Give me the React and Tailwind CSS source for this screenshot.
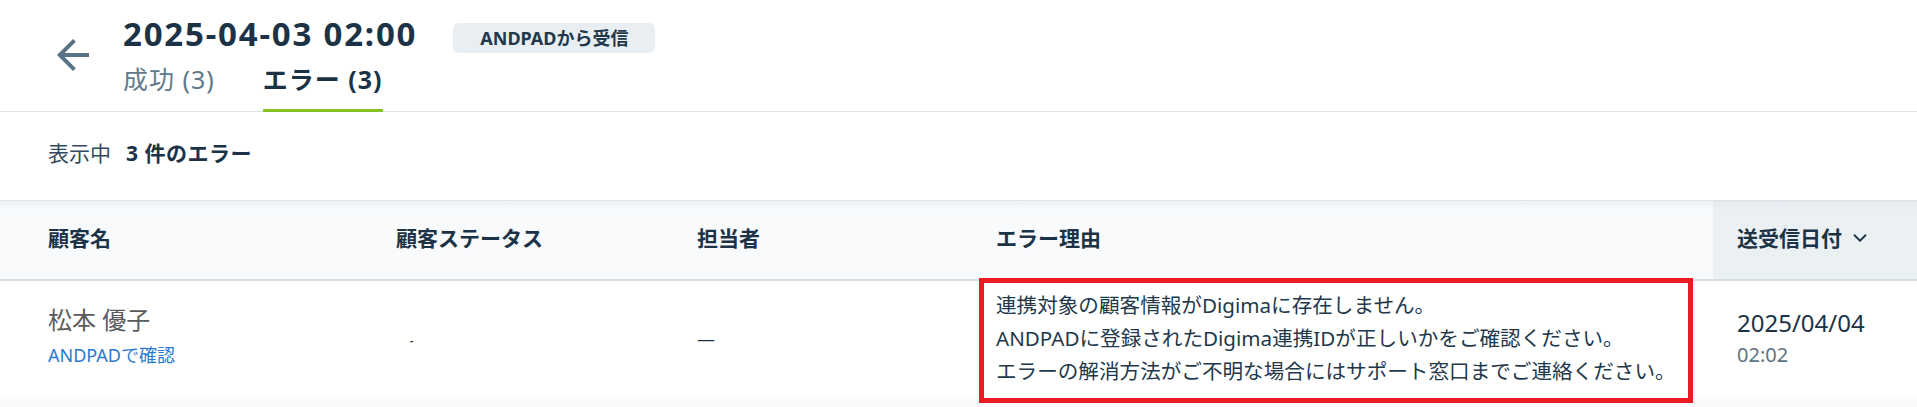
import React from 'react';
import { ChevronDown } from 'lucide-react';

const COLUMNS = [
  { key: 'name', label: '顧客名', cls: 'pl-[48px]' },
  { key: 'status', label: '顧客ステータス', cls: 'pl-[24px]' },
  { key: 'owner', label: '担当者', cls: 'pl-[24px]' },
  { key: 'reason', label: 'エラー理由', cls: 'pl-[24px]' },
];

const ERROR_LINES = [
  '連携対象の顧客情報がDigimaに存在しません。',
  'ANDPADに登録されたDigima連携IDが正しいかをご確認ください。',
  'エラーの解消方法がご不明な場合にはサポート窓口までご連絡ください。',
];

const GRID = 'grid grid-cols-[372px_301px_299px_741px_1fr]';

const BackArrow = () => (
  <svg width="48" height="48" viewBox="0 0 24 24" fill="#587386" aria-hidden="true">
    <path d="M20 11H7.83l5.59-5.59L12 4l-8 8 8 8 1.41-1.41L7.83 13H20v-2z" />
  </svg>
);

const App = () => {
  return (
    <div className="w-[1917px] h-[407px] overflow-hidden bg-white text-[#1c3347] font-['Noto_Sans','Noto_Sans_CJK_JP',sans-serif]">
      {/* Page header */}
      <header className="h-[112px] border-b border-[#dde3ea] flex">
        <div className="w-[123px] pl-[49px] pt-[31px]">
          <BackArrow />
        </div>
        <div className="flex flex-col pt-[14px]">
          <div className="flex items-start h-[40px]">
            <h1 className="text-[33px] leading-[40px] font-bold tracking-[1.8px]">2025-04-03 02:00</h1>
            <span className="ml-[36px] mt-[9px] h-[30px] px-[27px] flex items-center rounded-[6px] bg-[#e8eef1] text-[18px] font-bold text-[#22394d]">
              ANDPADから受信
            </span>
          </div>
          <nav className="flex gap-[48px] mt-[10px] -mb-px">
            <button type="button" className="pb-[18px] text-[25px] leading-[30px] tracking-[1px] text-[#60798b]">
              成功 (3)
            </button>
            <button
              type="button"
              className="pb-[15px] border-b-[3px] border-[#84c225] text-[25px] leading-[30px] tracking-[1px] font-bold text-[#1c3347]"
            >
              エラー (3)
            </button>
          </nav>
        </div>
      </header>

      {/* Summary */}
      <div className="h-[88px] flex items-center pl-[48px] pb-[4px] text-[21px]">
        <span className="text-[#34495c]">表示中</span>
        <span className="ml-[15px] font-bold tracking-[0.5px]">3 件のエラー</span>
      </div>

      {/* Table */}
      <div className={`${GRID} h-[81px] border-t border-[#dde3ea] border-b-2 border-b-[#d6dee5] bg-[linear-gradient(to_bottom,#eef2f5,#f8fafc_10px)]`}>
        {COLUMNS.map((col) => (
          <div key={col.key} className={`flex items-center pb-[4px] text-[21px] leading-[28px] font-bold ${col.cls}`}>
            {col.label}
          </div>
        ))}
        <div className="flex items-center pb-[4px] pl-[24px] bg-[linear-gradient(to_bottom,#e4eaee,#ebf0f3_10px)] text-[21px] leading-[28px] font-bold">
          送受信日付
          <ChevronDown className="ml-[7px]" size={22} strokeWidth={2} />
        </div>
      </div>

      <div className={`${GRID} h-[118px] relative`}>
        <div className="pl-[48px] pt-[23px]">
          <div className="text-[24px] leading-[32px] text-[#5b5b5b]">松本 優子</div>
          <a href="#" className="block mt-[6px] text-[18px] leading-[26px] text-[#2a7ad0]">
            ANDPADで確認
          </a>
        </div>
        <div className="pl-[24px] flex items-center">
          <span className="ml-[14px] text-[10px] font-bold">-</span>
        </div>
        <div className="pl-[24px] flex items-center pb-[2px]">
          <span className="text-[18px] leading-[18px]">—</span>
        </div>
        <div className="pl-[24px] flex items-center pb-[4px]">
          <div className="text-[20.6px] leading-[33px] text-[#23384b]">
            {ERROR_LINES.map((line) => (
              <div key={line}>{line}</div>
            ))}
          </div>
        </div>
        <div className="pl-[24px] pt-[26px]">
          <div className="text-[24px] leading-[32px]">2025/04/04</div>
          <div className="mt-[3px] text-[20px] leading-[26px] text-[#5f7383]">02:02</div>
        </div>

        {/* Highlight annotation over the error reason cell */}
        <div className="absolute left-[979px] top-[-3px] w-[714px] h-[125px] border-[5px] border-[#ec1c24] pointer-events-none" />
      </div>

      <div className="h-[40px] bg-[#f8fafc]" />
    </div>
  );
};

export default App;
